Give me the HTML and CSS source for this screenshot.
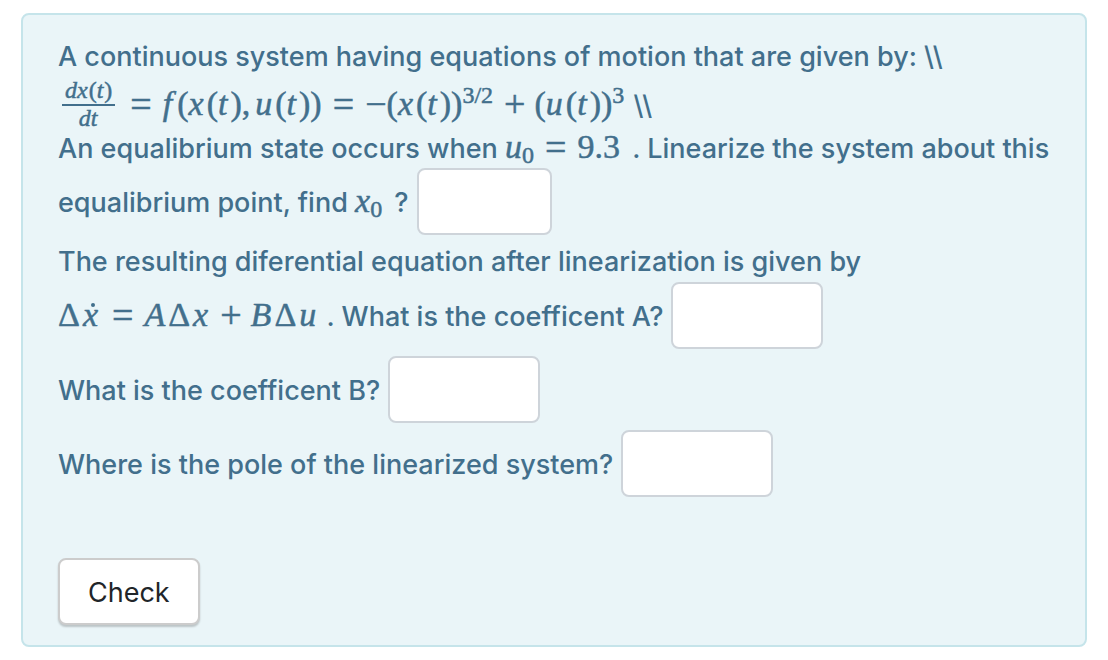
FILE: index.html
```html
<!DOCTYPE html>
<html lang="en">
<head>
<meta charset="utf-8">
<title>Question</title>
<link rel="stylesheet" href="styles.css">
</head>
<body>
<form class="question">
  <div class="block">
    <div class="row">A continuous system having equations of motion that are given by: \\</div>
    <div class="row equation">
      <span class="fraction math"><span class="numerator"><i>dx</i>(<i>t</i>)</span><span class="denominator"><i>dt</i></span></span>
      <span><span class="math"><span class="rel">=</span><i class="func">f</i>(<i>x</i>(<i>t</i>)<span class="comma">,</span><i>u</i>(<i>t</i>))<span class="rel">=</span><span class="sign">−</span>(<i>x</i>(<i>t</i>))<sup>3/2</sup><span class="bin">+</span>(<i>u</i>(<i>t</i>))<sup>3</sup></span> \\</span>
    </div>
    <div class="row compact"><span>An equalibrium state occurs when <span class="math"><i class="base">u</i><sub>0</sub><span class="rel">=</span>9.3</span><span class="after-math"> . Linearize the system about this</span></span></div>
    <div class="row field">
      <label for="x0">equalibrium point, find <span class="math"><i class="base">x</i><sub>0</sub></span><span class="after-math"> ?</span></label>
      <input class="answer short" id="x0" type="text">
    </div>
  </div>
  <div class="block">
    <div class="row">The resulting diferential equation after linearization is given by</div>
    <div class="row field">
      <label for="coef-a"><span class="math"><span class="delta">Δ</span><i class="dotted">x</i><span class="rel">=</span><i>A</i><span class="delta">Δ</span><i>x</i><span class="bin">+</span><i>B</i><span class="delta">Δ</span><i>u</i></span> . What is the coefficent A?</label>
      <input class="answer" id="coef-a" type="text">
    </div>
  </div>
  <div class="row field">
    <label for="coef-b">What is the coefficent B?</label>
    <input class="answer" id="coef-b" type="text">
  </div>
  <div class="row field">
    <label for="pole">Where is the pole of the linearized system?</label>
    <input class="answer" id="pole" type="text">
  </div>
  <button class="check" type="button">Check</button>
</form>
</body>
</html>
```
FILE: styles.css
```css
* {
  box-sizing: border-box;
}

body {
  margin: 0;
  padding: 13px 21px;
  background: #fff;
  color: #426f8c;
  font: 500 27px/40px Inter, "Liberation Sans", sans-serif;
}

.question {
  display: flex;
  flex-direction: column;
  align-items: flex-start;
  gap: 7px;
  padding: 22px 35px 20px;
  border: 2px solid #c5e4ea;
  border-radius: 8px;
  background: #eaf5f8;
}

.row {
  display: flex;
  align-items: center;
  white-space: nowrap;
}

.equation {
  min-height: 58px;
}

.compact {
  line-height: 28px;
  margin-bottom: 5px;
}

.field {
  gap: 8px;
}

.field label {
  padding-top: 2px;
}

.answer {
  width: 152px;
  height: 67px;
  padding: 12px 16px;
  border: 2px solid #ced4da;
  border-radius: 8px;
  background: #fff;
  color: #495057;
  font: inherit;
}

.short {
  width: 135px;
}

.check {
  height: 67px;
  margin-top: 54px;
  padding: 2px 28px 0;
  border: 2px solid #ccc;
  border-radius: 8px;
  background: #fff;
  box-shadow: 0 2px 2px rgba(0, 0, 0, 0.2);
  color: #212529;
  font: inherit;
  font-weight: 400;
}

.math {
  font-family: "Liberation Serif", serif;
  font-size: 34px;
  font-weight: 400;
  line-height: 1px;
  -webkit-text-stroke: 0.5px;
}

.math i {
  margin-right: 3px;
}

.math .base {
  margin-right: 0;
}

.math sup,
.math sub {
  font-size: 24px;
  line-height: 1px;
}

.math sup {
  margin-right: 2px;
  vertical-align: 12px;
}

.math sub {
  vertical-align: -5px;
}

.rel,
.bin,
.sign {
  font-size: 38px;
  vertical-align: -2px;
}

.rel {
  margin: 0 11px;
}

.bin {
  margin: 0 9px;
}

.comma {
  margin-right: 5px;
}

.delta {
  margin-right: 3px;
}

.math .func {
  margin-right: 5px;
}

.after-math {
  margin-left: 5px;
}

.dotted {
  position: relative;
}

.dotted::after {
  content: "";
  position: absolute;
  top: 7px;
  left: 8px;
  width: 4px;
  height: 4px;
  border-radius: 50%;
  background: currentColor;
}

.fraction {
  display: flex;
  flex-direction: column;
  align-items: center;
  margin: 0 4px 4px;
  font-size: 24px;
  line-height: 24px;
}

.math.fraction i {
  margin-right: 1px;
}

.numerator {
  padding: 0 3px 2px;
  border-bottom: 2px solid;
}
```
